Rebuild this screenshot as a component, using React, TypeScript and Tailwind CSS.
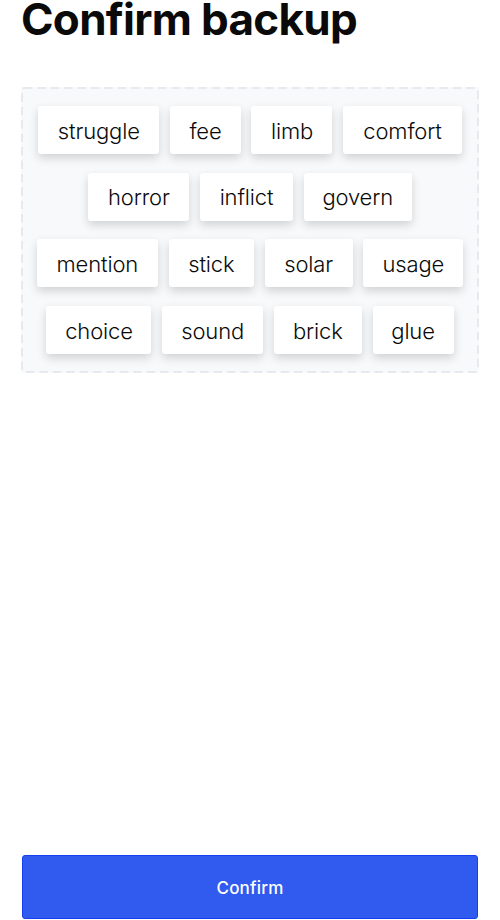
import React from "react";

type Word = { text: string; width: string };

const rows: Word[][] = [
  [
    { text: "struggle", width: "w-[121.3px]" },
    { text: "fee", width: "w-[70.7px]" },
    { text: "limb", width: "w-[81px]" },
    { text: "comfort", width: "w-[118.7px]" },
  ],
  [
    { text: "horror", width: "w-[101px]" },
    { text: "inflict", width: "w-[93px]" },
    { text: "govern", width: "w-[108px]" },
  ],
  [
    { text: "mention", width: "w-[121.3px]" },
    { text: "stick", width: "w-[85.3px]" },
    { text: "solar", width: "w-[88px]" },
    { text: "usage", width: "w-[100px]" },
  ],
  [
    { text: "choice", width: "w-[105px]" },
    { text: "sound", width: "w-[101px]" },
    { text: "brick", width: "w-[88px]" },
    { text: "glue", width: "w-[81px]" },
  ],
];

export default function App() {
  return (
    <div className="flex h-[920px] w-[500px] flex-col overflow-hidden bg-white px-[22px] font-['Inter',sans-serif] text-[#0a0a0a]">
      <h1 className="-ml-px h-[38px] whitespace-nowrap text-[44px] leading-[38px] font-bold tracking-[-0.7px]">Confirm backup</h1>
      <div className="relative -mx-px mt-[49px] h-[286px] bg-[#f8f9fb] pt-[19px]">
        <svg className="absolute inset-0" width="458" height="286" fill="none">
          <rect x="1" y="1" width="456" height="284" rx="2" stroke="#e1e4eb" strokeWidth="1.5" strokeDasharray="8.4 5" />
        </svg>
        <div className="relative flex flex-col gap-[18.7px]">
          {rows.map((row, i) => (
            <div key={i} className="flex justify-center gap-[10.7px]">
              {row.map((w) => (
                <button
                  key={w.text}
                  className={`${w.width} h-12 shrink-0 rounded-[3px] bg-white pt-[2px] text-center text-[22px] font-[340] tracking-[-0.15px] shadow-[0_4px_10px_rgba(0,0,0,0.16)]`}
                >
                  {w.text}
                </button>
              ))}
            </div>
          ))}
        </div>
      </div>
      <button className="mt-auto mb-px h-16 w-full shrink-0 rounded-[3px] border border-[#1440f0] bg-[#315bee] pt-1 text-[17px] font-medium tracking-[0.2px] text-white">
        Confirm
      </button>
    </div>
  );
}
